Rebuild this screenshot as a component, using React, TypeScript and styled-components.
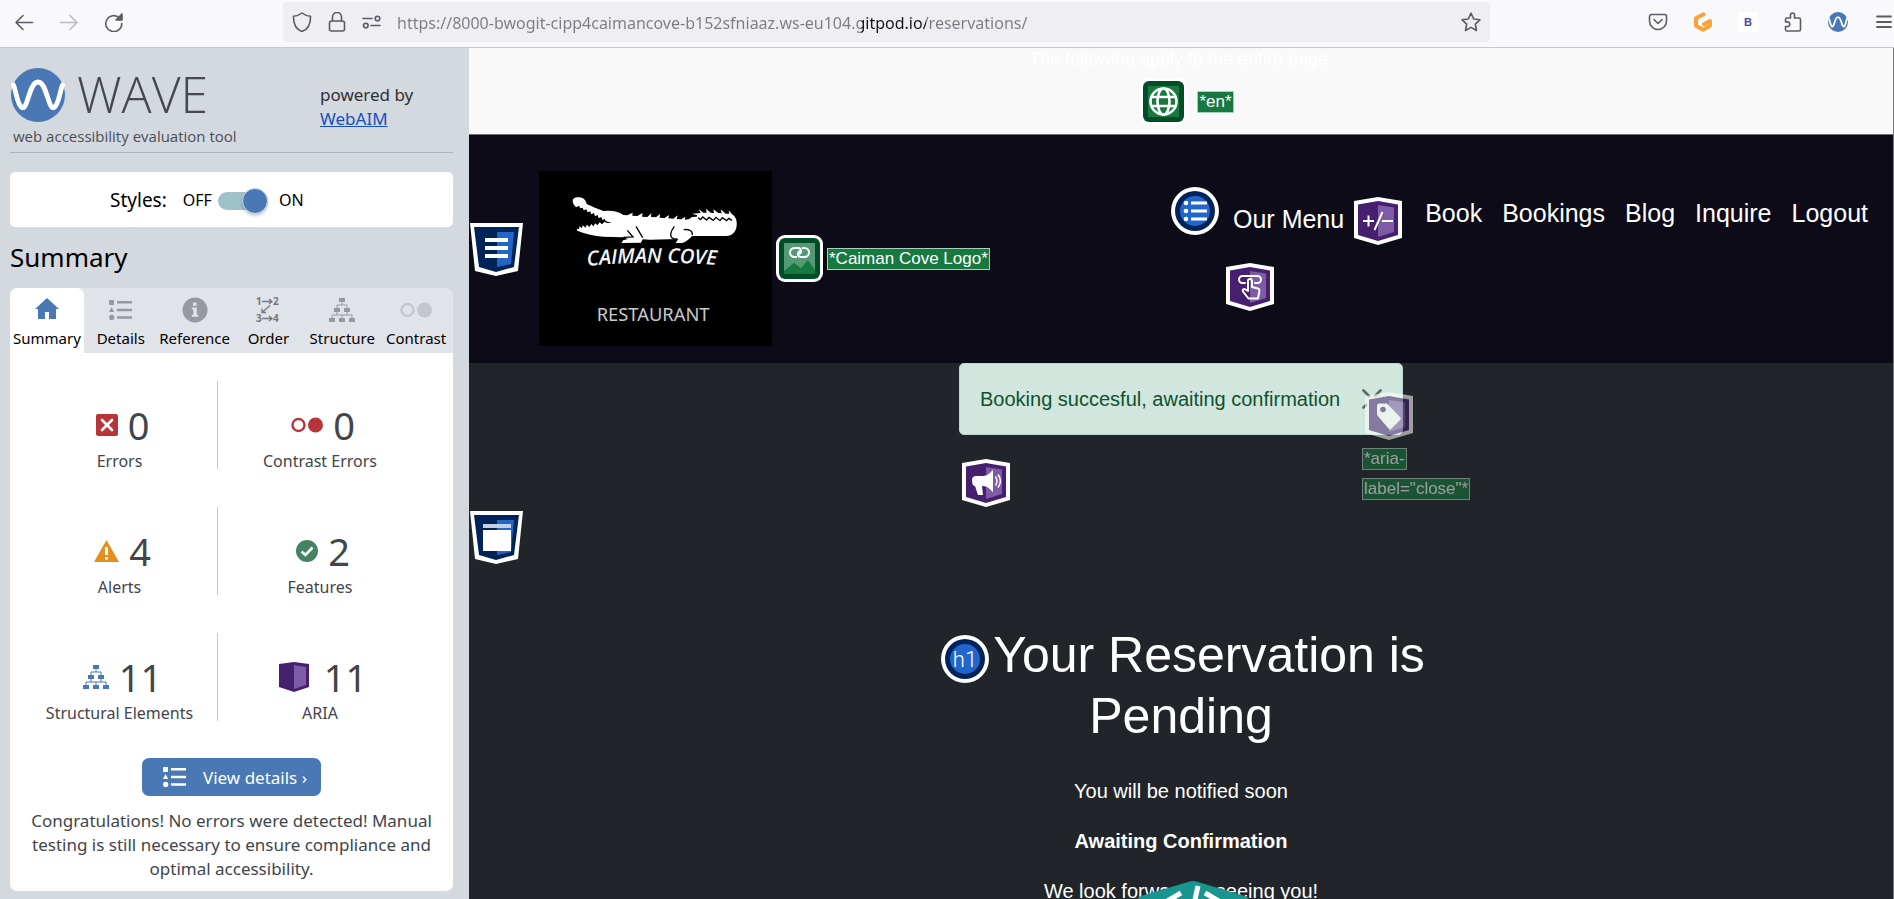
import React, { useState } from "react";
import styled, { createGlobalStyle } from "styled-components";

const GlobalStyle = createGlobalStyle`
  *, *::before, *::after { box-sizing: border-box; }
  body { margin: 0; background: #212529; }
  h1, h2, p, ul { margin: 0; padding: 0; }
  ul { list-style: none; }
  svg { display: block; flex: none; }
  button { border: 0; padding: 0; background: none; font: inherit; color: inherit; cursor: pointer; }
`;

const sans = `"Noto Sans", "Open Sans", sans-serif`;
const brandSans = `"Open Sans", "Noto Sans", sans-serif`;
const arial = `"Liberation Sans", Arial, sans-serif`;

const Shell = styled.div`
  display: flex;
  flex-direction: column;
  height: 100vh;
  overflow: hidden;
  font-family: ${sans};
`;

/* ---------- browser toolbar ---------- */

const Toolbar = styled.header`
  display: flex;
  align-items: center;
  flex: none;
  height: 48px;
  padding: 0 0 4px 14px;
  background: #f9f9fb;
  border-bottom: 1px solid #c9c7cf;
  color: #5b5b66;
`;

const NavButtons = styled.div`
  display: flex;
  gap: 25px;
  width: 269px;
`;

const IconButton = styled.button<{ $faded?: boolean }>`
  display: grid;
  place-items: center;
  width: 20px;
  height: 20px;
  opacity: ${(p) => (p.$faded ? 0.4 : 1)};
`;

const AddressBar = styled.form`
  display: flex;
  align-items: center;
  flex: 1;
  gap: 15px;
  height: 40px;
  padding: 0 9px 0 9px;
  background: #efeef3;
  border-radius: 4px;
`;

const Address = styled.input`
  flex: 1;
  min-width: 0;
  height: 30px;
  padding: 2px 0 0;
  border: 0;
  outline: 0;
  font: 16px ${sans};
  color: #7c7c84;
  background: linear-gradient(90deg, #7c7c84 464px, #15141a 464px, #15141a 529px, #7c7c84 529px);
  background-clip: text;
  -webkit-text-fill-color: transparent;
`;

const Extensions = styled.div`
  display: flex;
  align-items: center;
  gap: 25px;
  padding-left: 158px;
`;

const MenuSlot = styled.div`
  width: 21px;
  overflow: hidden;
`;

const LetterTile = styled.span`
  display: grid;
  place-items: center;
  width: 20px;
  height: 20px;
  background: #fff;
  color: #4b3fa8;
  font: 700 11px/20px ${arial};
`;

/* ---------- WAVE sidebar ---------- */

const Body = styled.div`
  display: flex;
  flex: 1;
  min-height: 0;
`;

const Sidebar = styled.aside`
  display: flex;
  flex-direction: column;
  flex: none;
  width: 469px;
  padding: 14px 16px 8px 10px;
  background: #d4d8df;
  color: #000;
`;

const BrandRow = styled.div`
  display: flex;
  justify-content: space-between;
  height: 91px;
  border-bottom: 1px solid #adb1b9;
`;

const WaveBrand = styled.div`
  display: flex;
  align-items: center;
  gap: 12px;
  height: 65px;
  padding-left: 1px;
  color: #45494d;
  font-family: ${brandSans};
  font-size: 50px;
  font-weight: 300;
  line-height: 65px;
`;

const Tagline = styled.p`
  padding-left: 3px;
  color: #4b4f55;
  font-family: ${brandSans};
  font-size: 15px;
  line-height: 18px;
`;

const Powered = styled.p`
  width: 133px;
  padding-top: 21px;
  color: #2f3134;
  font-size: 17px;
  line-height: 24px;
  white-space: nowrap;
  a { display: block; color: #1450c0; }
`;

const StylesBox = styled.label`
  display: flex;
  align-items: center;
  flex: none;
  height: 55px;
  margin-top: 19px;
  padding-left: 100px;
  background: #fff;
  border-radius: 5px;
  font-size: 19px;
`;

const SwitchText = styled.span<{ $left: number }>`
  margin-left: ${(p) => p.$left}px;
  font-size: 16px;
`;

const Switch = styled.input`
  appearance: none;
  position: relative;
  width: 50px;
  height: 18px;
  margin: 2px 0 0 6px;
  border-radius: 9px;
  background: #9fc1c9;
  &::before {
    content: "";
    position: absolute;
    top: -4px;
    left: 0;
    width: 26px;
    height: 26px;
    border: 1px solid #c9d8ee;
    border-radius: 50%;
    background: #4a78b5;
    box-shadow: 0 2px 3px #0003;
  }
  &:checked::before { left: 24px; }
`;

const PaneTitle = styled.h2`
  flex: none;
  height: 61px;
  font-size: 26px;
  font-weight: 400;
  line-height: 61px;
`;

const Tabs = styled.div`
  display: grid;
  grid-template-columns: repeat(6, 1fr);
  flex: none;
  height: 65px;
  background: #e0e3e8;
  border-radius: 7px 7px 0 0;
`;

const Tab = styled.button<{ $on: boolean }>`
  display: flex;
  flex-direction: column;
  align-items: center;
  justify-content: space-between;
  min-width: 0;
  padding: 8px 0 5px;
  border-radius: 7px 7px 0 0;
  background: ${(p) => (p.$on ? "#fff" : "transparent")};
  color: #000;
  font-size: 15px;
  line-height: 20px;
  white-space: nowrap;
  svg { height: 28px; overflow: visible; }
`;

const Panel = styled.div`
  flex: 1;
  min-height: 0;
  padding-top: 28px;
  background: #fff;
  border-radius: 0 0 7px 7px;
  color: #42454a;
  text-align: center;
`;

const Stats = styled.ul`
  display: grid;
  grid-template-columns: 196px 204px;
  row-gap: 38px;
  padding-left: 12px;
`;

const Stat = styled.li`
  display: flex;
  flex-direction: column;
  justify-content: flex-end;
  height: 88px;
  font-size: 16px;
  line-height: 16px;
  &:nth-child(odd) { border-right: 1px solid #c4c6ca; }
`;

const StatValue = styled.div<{ $gap: number }>`
  display: flex;
  align-items: center;
  justify-content: center;
  gap: ${(p) => p.$gap}px;
  margin-bottom: 5px;
  padding-left: 6px;
  font-size: 38px;
  line-height: 46px;
`;

const DetailsButton = styled.button`
  display: inline-flex;
  align-items: center;
  gap: 17px;
  height: 38px;
  margin-top: 37px;
  padding: 0 14px 0 21px;
  border-radius: 7px;
  background: #4a78b5;
  color: #fff;
  font-size: 17px;
`;

const Verdict = styled.p`
  padding: 13px 10px 0;
  font-size: 17px;
  line-height: 24px;
`;

/* ---------- evaluated page ---------- */

const Page = styled.main`
  position: relative;
  flex: 1;
  min-width: 0;
  overflow: hidden;
  background: #212529;
  border-right: 1px solid #77777c;
  color: #fff;
  font-family: ${arial};
  font-size: 20px;
  line-height: 30px;
`;

const PageWide = styled.section`
  height: 87px;
  background: #f9f9f9;
  border-bottom: 1px solid #6f6f73;
  text-align: center;
  p { font-size: 18px; line-height: 22px; }
`;

const PageWideRow = styled.div`
  display: flex;
  align-items: center;
  justify-content: center;
  gap: 10px;
  padding-top: 8px;
  padding-left: 12px;
`;

const Tag = styled.span`
  padding: 0 1px;
  border: 1px solid #a9d0ba;
  background: #17793f;
  color: #fff;
  font-size: 17px;
  line-height: 20px;
  white-space: nowrap;
`;

const SiteHeader = styled.header`
  display: flex;
  align-items: center;
  height: 228px;
  padding-left: 1px;
  background: #0d0b18;
`;

const SiteBrand = styled.a`
  display: flex;
  align-items: center;
  gap: 4px;
  align-self: flex-start;
  margin: 36px auto 0 16px;
  color: inherit;
  text-decoration: none;
`;

const SiteNav = styled.nav`
  display: flex;
  align-items: flex-start;
  align-self: flex-start;
  gap: 7px;
  padding: 52px 15px 0 0;
  font-size: 25px;
`;

const Links = styled.ul`
  display: flex;
`;

const NavLink = styled.a`
  display: block;
  padding: 7px 10px 0;
  color: #fff;
  line-height: 38px;
  text-decoration: none;
`;

const MenuGroup = styled.li`
  display: flex;
  flex-direction: column;
  gap: 18px;
  margin-right: 13px;
  padding-top: 10px;
`;

const MenuButton = styled.button`
  display: flex;
  align-items: flex-start;
  gap: 10px;
  height: 48px;
  padding-left: 7px;
  line-height: 44px;
`;

const Alert = styled.div`
  position: relative;
  width: 444px;
  height: 72px;
  margin: 0 auto;
  padding: 20px;
  border: 1px solid #badbcc;
  border-radius: 5px;
  background: #d1e7dd;
  color: #0f5132;
  line-height: 30px;
`;

const CloseButton = styled.button`
  position: absolute;
  top: 25px;
  right: 20px;
`;

const CloseNotes = styled.div`
  position: absolute;
  top: 28px;
  left: 402px;
  display: flex;
  flex-direction: column;
  align-items: flex-start;
  gap: 8px;
  opacity: 0.55;
  svg { margin-left: 3px; }
`;

const AlertRole = styled.div`
  width: 444px;
  margin: 24px auto 4px;
  padding-left: 3px;
`;

const Landmark = styled.div`
  padding-left: 1px;
`;

const Confirmation = styled.section`
  padding-top: 61px;
  text-align: center;
  p { margin-bottom: 20px; }
`;

const Heading = styled.h1`
  margin-bottom: 29px;
  font-size: 50px;
  font-weight: 400;
  line-height: 61px;
  svg { display: inline-block; margin: 0 4px; vertical-align: -11px; }
`;

const CodeToggle = styled.button`
  position: absolute;
  right: 642px;
  bottom: -102px;
`;

/* ---------- drawings ---------- */

const WaveLogo = ({ size }: { size: number }) => (
  <svg width={size} height={size} viewBox="0 0 54 54">
    <circle cx="27" cy="27" r="27" fill="#4a78b5" />
    <path d="M2.500 17C5 22 6 37 11 39.500C17 42 18 14 27 14C36 14 37 42 43 39.500C48 37 49 22 51.500 17" fill="none" stroke="#fff" strokeWidth="4.800" strokeLinecap="round" />
  </svg>
);

const ListIcon = ({ color }: { color: string }) => (
  <svg width="23" height="20" viewBox="0 0 23 20" fill={color}>
    <path d="M0 0h5v5H0zM2.500 7L5.200 12H0zM8 1h15v2.500H8zM8 8.700h15v2.500H8zM8 16.200h15v2.500H8z" />
    <circle cx="2.700" cy="17.400" r="2.600" />
  </svg>
);

const TreeIcon = ({ color }: { color: string }) => (
  <svg width="26" height="24" viewBox="0 0 26 24" fill={color}>
    <path d="M10 0h6v4h-6zM5 10h6v4H5zM15 10h6v4h-6zM0 20h6v4H0zM10 20h6v4h-6zM20 20h6v4h-6z" />
    <path d="M13 4v3M8 10V7h10v3M8 14v3M18 14v3M3 20v-3h20v3M13 17v3" fill="none" stroke={color} strokeWidth="1" />
  </svg>
);

const ContrastIcon = ({ color, size }: { color: string; size: number }) => (
  <svg width={size} height="16" viewBox="0 0 32 16">
    <circle cx="7.500" cy="8" r="6" fill="none" stroke={color} strokeWidth="2.400" />
    <circle cx="24.500" cy="8" r="7.500" fill={color} />
  </svg>
);

const tabIcons: Record<string, React.ReactNode> = {
  Summary: (
    <svg width="24" height="28" viewBox="0 0 24 28" fill="#4a78b5">
      <path d="M12 2L24 13h-3v10h-7v-7h-4v7H3V13H0z" />
    </svg>
  ),
  Details: <ListIcon color="#96999e" />,
  Reference: (
    <svg width="26" height="28" viewBox="0 0 26 28">
      <circle cx="13" cy="14" r="12.500" fill="#96999e" />
      <path d="M11 6.500h3.600v3.200H11zM9.800 11.500h5v7.300h1.500v2h-6.500v-2h1.500v-5.200H9.800z" fill="#e0e3e8" />
    </svg>
  ),
  Order: (
    <svg width="24" height="28" viewBox="0 0 24 28" fill="#75797f" fontFamily="Open Sans" fontSize="10" fontWeight="700">
      <text x="0" y="9">1</text>
      <text x="17" y="9">2</text>
      <text x="0" y="26">3</text>
      <text x="17" y="26">4</text>
      <path d="M6 5.500h10M13 3l3 2.500-3 2.500M6 22.500h10M13 20l3 2.500-3 2.500M14 9.500L6 16.500M6 12.500v4h4" fill="none" stroke="#75797f" strokeWidth="1.300" />
    </svg>
  ),
  Structure: <TreeIcon color="#96999e" />,
  Contrast: <ContrastIcon color="#c3c6ca" size={32} />,
};

const ShieldBadge = ({ children }: { children: React.ReactNode }) => (
  <svg width="53" height="53" viewBox="0 0 53 53">
    <path d="M0 0H53L48 48L26 53L5 48Z" fill="#fff" />
    <path d="M4 4H49L44 44L26 49L9 44Z" fill="#002457" />
    <path d="M27 9H44L41 41L27 44Z" fill="#2266c6" />
    {children}
  </svg>
);

const AriaBadge = ({ children }: { children: React.ReactNode }) => (
  <svg width="48" height="48" viewBox="0 0 48 48">
    <path d="M0 4L24 0L48 4V41L24 48L0 41Z" fill="#fff" />
    <path d="M4 7.500L24 4L44 7.500V38L24 44L4 38Z" fill="#46206e" />
    <path d="M24 8L40 10.500V35L24 40Z" fill="#7e5ba5" />
    {children}
  </svg>
);

const RoundBadge = ({ children }: { children: React.ReactNode }) => (
  <svg width="48" height="48" viewBox="0 0 48 48">
    <circle cx="24" cy="24" r="24" fill="#fff" />
    <circle cx="24" cy="24" r="20" fill="#00235c" />
    <circle cx="24" cy="24" r="15" fill="#2266cc" />
    {children}
  </svg>
);

const GreenBadge = ({ children }: { children: React.ReactNode }) => (
  <svg width="47" height="47" viewBox="0 0 47 47">
    <rect width="47" height="47" rx="9" fill="#fff" />
    <rect x="3" y="3" width="41" height="41" rx="6" fill="#004d27" />
    <rect x="8" y="8" width="31" height="31" fill="#17793f" />
    {children}
  </svg>
);

const CaimanLogo = () => (
  <svg width="233" height="175" viewBox="-3 -42 699 525" role="img" aria-label="Caiman Cove Logo">
    <rect x="-3" y="-42" width="699" height="525" fill="#000" />
    <path
      fill="#fff"
      d="M98 48C98 38 108 35 118 37C130 38 138 45 140 57L165 68L192 79C208 76 232 77 250 90L262 91L278 83L277 92L292 93L308 84L306 95L322 96L334 85L333 96L348 97L360 87L359 98L374 99L387 90L385 100L400 101L413 91L410 102L424 103L436 95L434 104L446 103L456 96L470 95L472 91L456 86L482 84L476 72L490 83L500 83L498 71L512 83L522 84L520 73L535 84L545 85L542 73L557 86L568 86L566 76L576 88C587 94 592 108 590 122C588 140 578 152 558 153L456 153C448 162 438 172 425 174H407L415 162L330 164L308 163L303 173L245 174L249 166L264 162L250 157L190 155C165 153 135 147 112 137C108 130 114 132 117 132L119 123L125 130L129 121L136 128L141 119L148 126L154 117L160 124L166 115L172 121L179 112L186 118L194 110L200 114L215 114L197 108L194 102L187 105L184 96L176 100L173 90L165 94L162 84L153 88L151 79L143 82L139 73L131 76L128 68L121 70L117 62L108 67C103 61 98 56 98 48Z"
    />
    <g fill="none" stroke="#000" strokeWidth="4">
      <path d="M288 124L308 158M262 136L279 156L250 157M403 124C391 140 387 156 401 161L412 162M431 134C448 132 458 137 457 150" />
      <path d="M474 98L482 104L488 96L500 105L507 97L520 106L528 97L540 107L547 98L560 107L566 100L576 106" />
    </g>
    <path id="logo-arc" d="M142 243Q340 223 560 243" fill="none" />
    <text fill="#f4f4f4" fontFamily="Open Sans" fontSize="61" fontWeight="600" fontStyle="italic">
      <textPath href="#logo-arc">CAIMAN COVE</textPath>
    </text>
    <text x="170" y="407" fill="#c9c9c9" fontFamily="Noto Sans" fontSize="55">RESTAURANT</text>
  </svg>
);

const stats: { label: string; value: number; gap: number; icon: React.ReactNode }[] = [
  {
    label: "Errors", value: 0, gap: 10,
    icon: (
      <svg width="22" height="22" viewBox="0 0 22 22">
        <rect width="22" height="22" rx="2" fill="#b93438" />
        <path d="M6 6l10 10M16 6L6 16" stroke="#fff" strokeWidth="2.600" strokeLinecap="round" />
      </svg>
    ),
  },
  { label: "Contrast Errors", value: 0, gap: 10, icon: <ContrastIcon color="#b93438" size={32} /> },
  {
    label: "Alerts", value: 4, gap: 10,
    icon: (
      <svg width="25" height="22" viewBox="0 0 25 22">
        <path d="M12.500 0L25 22H0Z" fill="#e38f1e" />
        <path d="M11 7h3v8h-3zM11 17h3v2.600h-3z" fill="#fff" />
      </svg>
    ),
  },
  {
    label: "Features", value: 2, gap: 10,
    icon: (
      <svg width="22" height="22" viewBox="0 0 22 22">
        <circle cx="11" cy="11" r="11" fill="#458261" />
        <path d="M5.500 11.500l4 3.500 7-7.500" fill="none" stroke="#fff" strokeWidth="2.600" />
      </svg>
    ),
  },
  { label: "Structural Elements", value: 11, gap: 10, icon: <TreeIcon color="#4a78b5" /> },
  {
    label: "ARIA", value: 11, gap: 15,
    icon: (
      <svg width="30" height="30" viewBox="0 0 30 30">
        <path d="M0 2L15 0L30 2V25L15 30L0 25Z" fill="#46206e" />
        <path d="M15 3L27 5V23L15 27Z" fill="#7e5ba5" />
      </svg>
    ),
  },
];

const line = { fill: "none", stroke: "currentColor", strokeWidth: 1.6, strokeLinecap: "round", strokeLinejoin: "round" } as const;

export default function App() {
  const [tab, setTab] = useState("Summary");
  const [stylesOn, setStylesOn] = useState(true);

  return (
    <Shell>
      <GlobalStyle />
      <Toolbar>
        <NavButtons>
          <IconButton aria-label="Back">
            <svg width="20" height="20" viewBox="0 0 20 20" {...line}><path d="M18.500 10.500H2M9 3.500l-7 7 7 7" /></svg>
          </IconButton>
          <IconButton aria-label="Forward" $faded>
            <svg width="20" height="20" viewBox="0 0 20 20" {...line}><path d="M1.500 10.500H18M11 3.500l7 7-7 7" /></svg>
          </IconButton>
          <IconButton aria-label="Reload">
            <svg width="20" height="20" viewBox="0 0 20 20" {...line}>
              <path d="M17.800 11.500A8 8 0 1 1 15.500 6" />
              <path d="M18 2v6h-6z" fill="currentColor" />
            </svg>
          </IconButton>
        </NavButtons>
        <AddressBar>
          <svg width="20" height="20" viewBox="0 0 20 20" {...line}><path d="M10 1C7.500 3 4.500 4 1.500 4.300C1.300 11 3.500 17 10 19.500C16.500 17 18.700 11 18.500 4.300C15.500 4 12.500 3 10 1Z" /></svg>
          <svg width="20" height="20" viewBox="0 0 20 20" {...line}><rect x="2.500" y="9" width="15" height="10" rx="2" /><path d="M5.500 9V5a4.500 4.500 0 0 1 9 0v4" /></svg>
          <svg width="20" height="20" viewBox="0 0 20 20" {...line}><path d="M1 6.500h9M9 13.500h9" /><circle cx="15.500" cy="6.500" r="2.300" /><circle cx="3.800" cy="13.500" r="2.300" /></svg>
          <Address aria-label="Address" defaultValue="https://8000-bwogit-cipp4caimancove-b152sfniaaz.ws-eu104.gitpod.io/reservations/" />
          <IconButton type="button" aria-label="Bookmark this page">
            <svg width="20" height="20" viewBox="0 0 20 20" {...line}><path d="M10 1.200l2.700 5.800 6.200.8-4.600 4.300 1.200 6.400L10 15.400l-5.500 3.100 1.200-6.400L1.100 7.800 7.300 7z" /></svg>
          </IconButton>
        </AddressBar>
        <Extensions>
          <IconButton aria-label="Save to Pocket">
            <svg width="20" height="20" viewBox="0 0 20 20" {...line}><path d="M3.500 2.500h13a2 2 0 0 1 2 2V9A8.500 8.500 0 0 1 1.500 9V4.500a2 2 0 0 1 2-2z" /><path d="M6 7.500l4 4 4-4" /></svg>
          </IconButton>
          <IconButton aria-label="Gitpod">
            <svg width="20" height="20" viewBox="0 0 20 20" fill="none" stroke="#fba337" strokeWidth="4" strokeLinecap="round" strokeLinejoin="round"><path d="M10.500 2.300L3 6.300v7.500l7 4 7-4V9l-6 3.300" /></svg>
          </IconButton>
          <LetterTile>B</LetterTile>
          <IconButton aria-label="Extensions">
            <svg width="20" height="20" viewBox="0 0 20 20" {...line}><path d="M2.500 9V7.500A1.500 1.500 0 0 1 4 6h3.500V3a2 2 0 0 1 4 0v3H16a1.500 1.500 0 0 1 1.500 1.500v10a1.500 1.500 0 0 1-1.500 1.500H4a1.500 1.500 0 0 1-1.500-1.500V14.500h2a2.300 2.300 0 0 0 0-4.600h-2z" /></svg>
          </IconButton>
          <IconButton aria-label="WAVE"><WaveLogo size={20} /></IconButton>
          <MenuSlot>
            <IconButton aria-label="Open application menu">
              <svg width="20" height="20" viewBox="0 0 20 20" {...line} strokeWidth={1.800}><path d="M4 4.500h14M4 10h14M4 15h14" /></svg>
            </IconButton>
          </MenuSlot>
        </Extensions>
      </Toolbar>

      <Body>
        <Sidebar>
          <BrandRow>
            <div>
              <WaveBrand><WaveLogo size={54} />WAVE</WaveBrand>
              <Tagline>web accessibility evaluation tool</Tagline>
            </div>
            <Powered>powered by <a href="#webaim">WebAIM</a></Powered>
          </BrandRow>
          <StylesBox>
            Styles:
            <SwitchText $left={16}>OFF</SwitchText>
            <Switch type="checkbox" checked={stylesOn} onChange={(e) => setStylesOn(e.target.checked)} />
            <SwitchText $left={11}>ON</SwitchText>
          </StylesBox>
          <PaneTitle>{tab}</PaneTitle>
          <Tabs role="tablist">
            {Object.keys(tabIcons).map((name) => (
              <Tab key={name} role="tab" aria-selected={tab === name} $on={tab === name} onClick={() => setTab(name)}>
                {tabIcons[name]}
                {name}
              </Tab>
            ))}
          </Tabs>
          <Panel>
            <Stats>
              {stats.map((s) => (
                <Stat key={s.label}>
                  <StatValue $gap={s.gap}>{s.icon}{s.value}</StatValue>
                  {s.label}
                </Stat>
              ))}
            </Stats>
            <DetailsButton onClick={() => setTab("Details")}><ListIcon color="#fff" />View details ›</DetailsButton>
            <Verdict>
              Congratulations! No errors were detected! Manual testing is still necessary to ensure compliance and optimal accessibility.
            </Verdict>
          </Panel>
        </Sidebar>

        <Page>
          <PageWide>
            <p>The following apply to the entire page:</p>
            <PageWideRow>
              <GreenBadge>
                <g fill="none" stroke="#fff" strokeWidth="2.600">
                  <circle cx="23.500" cy="23.500" r="13" />
                  <ellipse cx="23.500" cy="23.500" rx="6" ry="13" />
                  <path d="M11.500 19h24M11.500 28h24" />
                </g>
              </GreenBadge>
              <Tag>*en*</Tag>
            </PageWideRow>
          </PageWide>

          <SiteHeader>
            <ShieldBadge><path d="M15 15h23v4H15zM15 23h23v4H15zM15 31h23v4H15z" fill="#fff" /></ShieldBadge>
            <SiteBrand href="#home">
              <CaimanLogo />
              <GreenBadge>
                <path d="M8 8H39V35L32 25L25 33L18 28L8 36Z" fill="#549b75" />
                <path d="M21 22H18.500a4.500 4.500 0 0 1 0-9H22q3 0 3 3t-3 3M26 13h2.500a4.500 4.500 0 0 1 0 9H25q-3 0-3-3t3-3" fill="none" stroke="#fff" strokeWidth="2" />
              </GreenBadge>
              <Tag>*Caiman Cove Logo*</Tag>
            </SiteBrand>
            <SiteNav>
              <RoundBadge>
                <g fill="#fff">
                  <circle cx="15" cy="16" r="2.300" /><circle cx="15" cy="24" r="2.300" /><circle cx="15" cy="32" r="2.300" />
                  <path d="M20 14.500h16v3H20zM20 22.500h16v3H20zM20 30.500h16v3H20z" />
                </g>
              </RoundBadge>
              <Links>
                <MenuGroup>
                  <MenuButton aria-haspopup="menu">
                    Our Menu
                    <AriaBadge>
                      <path d="M9 24h11M14.500 18.500v11M28.500 15l-8 18M28 24h11" stroke="#fff" strokeWidth="2" fill="none" />
                    </AriaBadge>
                  </MenuButton>
                  <AriaBadge>
                    <g fill="none" stroke="#fff" strokeWidth="2" strokeLinejoin="round" strokeLinecap="round">
                      <path d="M19 20h-2.500a3.500 3.500 0 0 1 0-7h15a3.500 3.500 0 0 1 0 7H29" />
                      <path d="M22 28V18a1.800 1.800 0 0 1 4 0v6l6 1.500c1.500.5 1.500 1.500 1.300 3L32 35.500H22.500L17 28.500c-1-2 1-3 2.500-2z" />
                    </g>
                  </AriaBadge>
                </MenuGroup>
                {["Book", "Bookings", "Blog", "Inquire", "Logout"].map((t) => (
                  <li key={t}><NavLink href={`#${t.toLowerCase()}`}>{t}</NavLink></li>
                ))}
              </Links>
            </SiteNav>
          </SiteHeader>

          <Alert role="alert">
            Booking succesful, awaiting confirmation
            <CloseButton aria-label="close">
              <svg width="20" height="20" viewBox="0 0 20 20" stroke="#5c6b64" strokeWidth="2.600" strokeLinecap="round"><path d="M1.500 1.500l5.500 5.500M18.500 1.500l-5 5M1.500 18.500l2.500-2.500" /></svg>
            </CloseButton>
            <CloseNotes>
              <AriaBadge>
                <path d="M12 14a2.500 2.500 0 0 1 2.500-2.500H22L35 25a2 2 0 0 1 0 3l-8.500 8.500a2 2 0 0 1-3 0L12 23z" fill="#fff" />
                <circle cx="18" cy="17.500" r="2.800" fill="#46206e" />
              </AriaBadge>
              <Tag>*aria-</Tag>
              <Tag>label="close"*</Tag>
            </CloseNotes>
          </Alert>
          <AlertRole>
            <AriaBadge>
              <path d="M10 21c0-3 2-4 4-4h7c4 0 7-3 10-6v22c-3-3-6-6-10-6l-1 0 1 9h-5l-3-9c-2 0-3-2-3-6z" fill="#fff" />
              <path d="M33.500 17.500c2 3 2 6 0 9M36 15.500c3 4 3 9 0 13" fill="none" stroke="#fff" strokeWidth="1.500" />
            </AriaBadge>
          </AlertRole>
          <Landmark>
            <ShieldBadge>
              <path d="M13 13h28v4H13z" fill="#c3cfe4" />
              <path d="M13 19h28v21H13z" fill="#fff" />
            </ShieldBadge>
          </Landmark>

          <Confirmation>
            <Heading>
              <RoundBadge>
                <text x="24" y="32" textAnchor="middle" fill="#fff" fontFamily="Roboto" fontSize="22" fontWeight="300">h1</text>
              </RoundBadge>
              Your Reservation is<br />Pending
            </Heading>
            <p>You will be notified soon</p>
            <p><strong>Awaiting Confirmation</strong></p>
            <p>We look forward to seeing you!</p>
          </Confirmation>
          <CodeToggle aria-label="Code">
            <svg width="116" height="120" viewBox="0 0 116 120">
              <path d="M53 1Q58 -1 63 1L110 15Q116 18 116 24V92L58 120L0 92V24Q0 18 6 15Z" fill="#17968f" />
              <path d="M46 12L20 27L46 44M70 12L96 27L70 44M63 5L53 50" fill="none" stroke="#fff" strokeWidth="5" />
            </svg>
          </CodeToggle>
        </Page>
      </Body>
    </Shell>
  );
}
